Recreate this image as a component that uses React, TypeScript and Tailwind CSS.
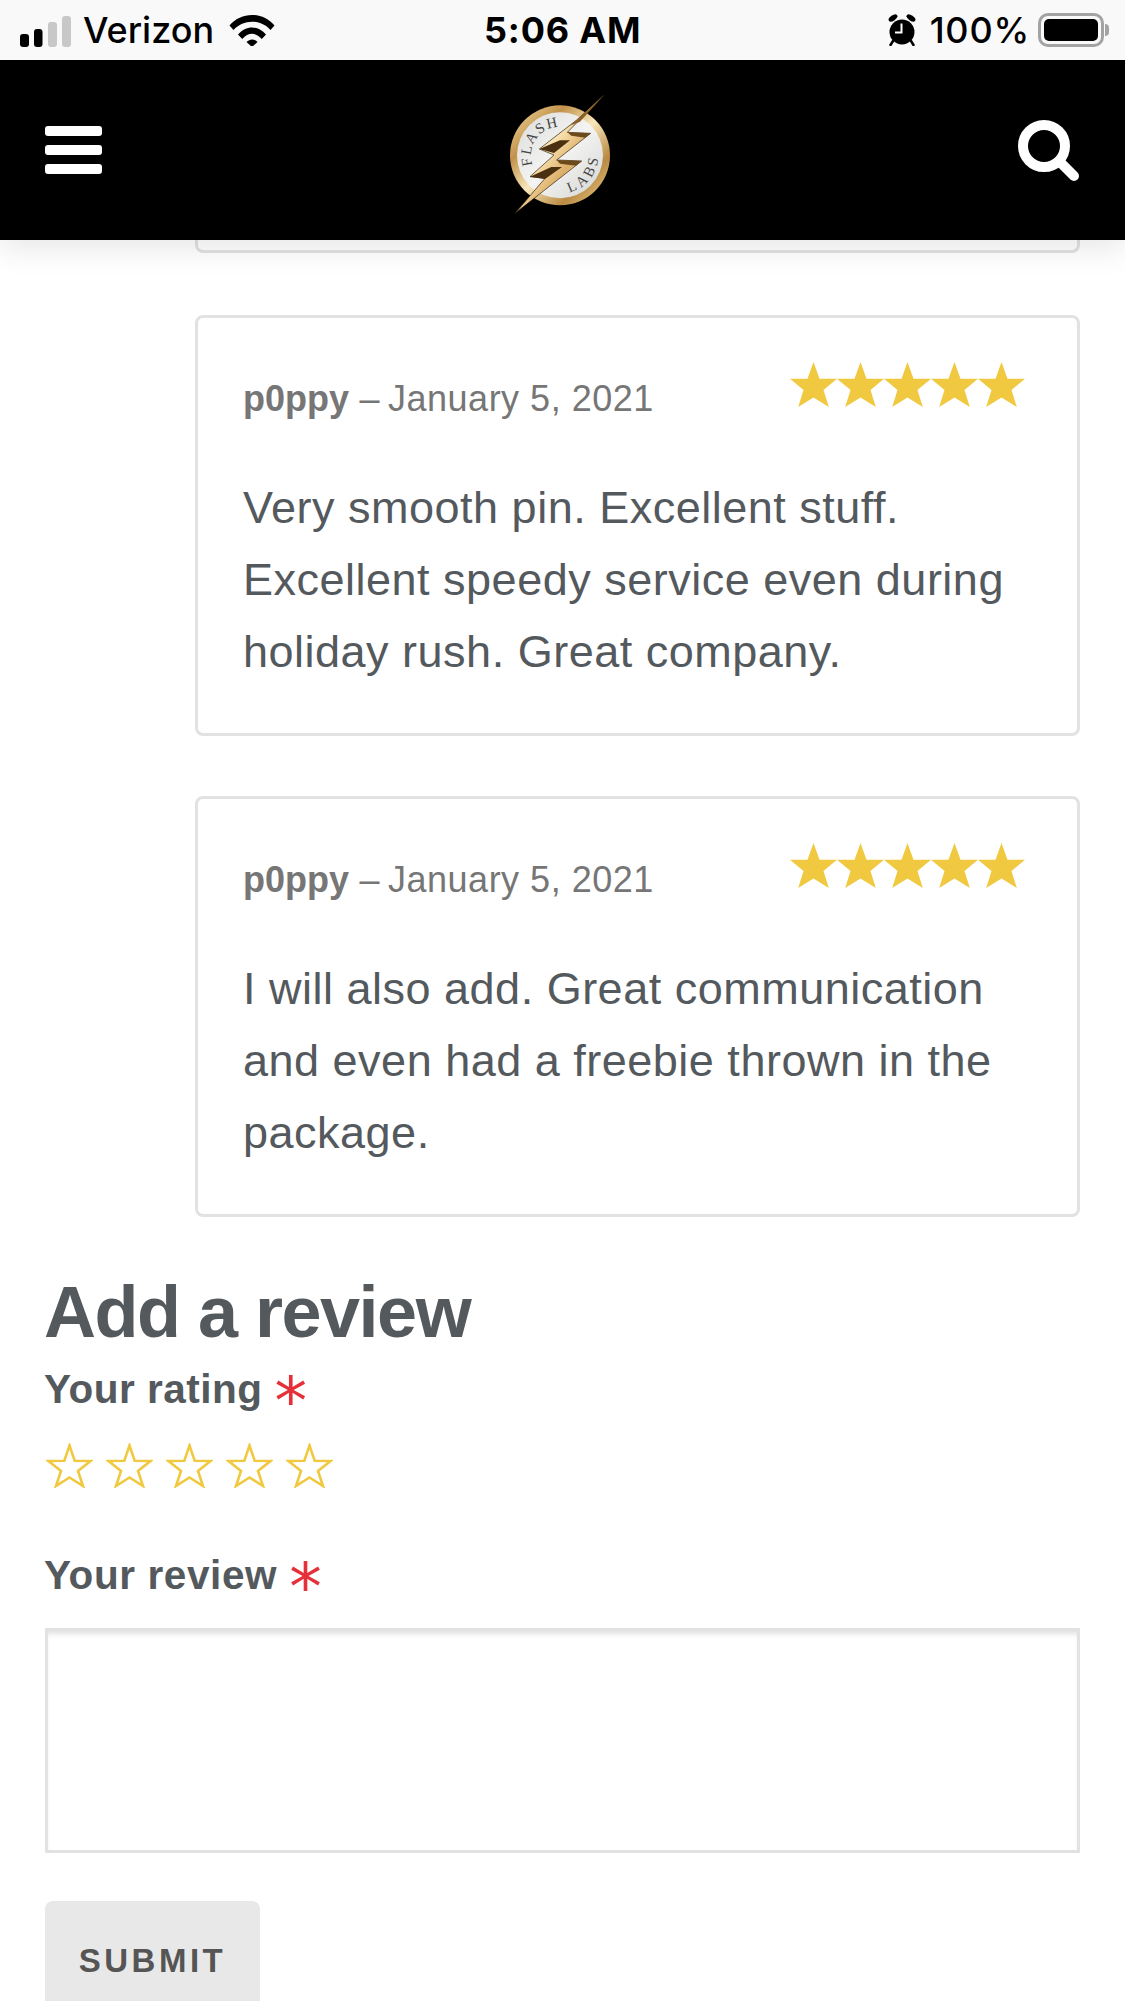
const helvetica = "font-['Liberation_Sans',Arial,sans-serif]";

const reviews = [
  { text: "Very smooth pin. Excellent stuff. Excellent speedy service even during holiday rush. Great company." },
  { text: "I will also add. Great communication and even had a freebie thrown in the package." },
];

function Star({ filled }: { filled?: boolean }) {
  return (
    <svg viewBox="0 0 47 45" className="h-[45px] w-[47px]">
      <polygon
        points={
          filled
            ? "23.5,0 29.5,16.7 47,16.7 33.5,28 38.8,45 23.5,35.5 8.2,45 13.5,28 0,16.7 17.5,16.7"
            : "23.5,2.5 28.7,17.8 44.5,18 32,28 37,43 23.5,34.5 10,43 15,28 2.5,18 18.3,17.8"
        }
        fill={filled ? "#f0c940" : "none"}
        stroke={filled ? "none" : "#f0c940"}
        strokeWidth="2.6"
      />
    </svg>
  );
}

function StatusBar() {
  return (
    <div className="flex h-[60px] items-center bg-[#f9f9f9] pl-[20px] pr-[16px] font-['Inter',sans-serif] text-[36px] leading-none text-black">
      <div className="flex w-[280px] items-center">
        <svg viewBox="0 0 51 32" className="h-[32px] w-[51px] translate-y-[2px]">
          <rect x="0" y="18" width="9" height="13" rx="3" fill="#000" />
          <rect x="14" y="13" width="8.5" height="18" rx="3" fill="#000" />
          <rect x="28" y="6" width="9" height="25" rx="3" fill="#c8c8c8" />
          <rect x="42" y="0" width="9" height="31" rx="3" fill="#c8c8c8" />
        </svg>
        <span className="ml-[12px] font-medium">Verizon</span>
        <svg viewBox="0 0 46 32" className="ml-[15px] h-[32px] w-[46px] shrink-0">
          <path d="M0.5 11.5 C12 -2.5 34 -2.5 45.5 11.5 L41.5 16 C31.5 5 14.5 5 4.5 16 Z" fill="#000" />
          <path d="M9 20.5 C17 11 29 11 37 20.5 L32.8 25 C26.5 18 19.5 18 13.2 25 Z" fill="#000" />
          <path d="M17.5 28 C21 24.5 25 24.5 28.5 28 L23 33 Z" fill="#000" />
        </svg>
      </div>
      <span className="ml-[184px] font-bold tracking-[0.8px]">5:06 AM</span>
      <div className="ml-auto flex items-center">
        <svg viewBox="0 0 30 32" className="h-[32px] w-[30px]">
          <circle cx="15" cy="18" r="12.5" fill="#000" />
          <ellipse cx="6" cy="4" rx="5" ry="2.6" transform="rotate(-35 6 4)" fill="#000" />
          <ellipse cx="24" cy="4" rx="5" ry="2.6" transform="rotate(35 24 4)" fill="#000" />
          <path d="M6 27 L3.5 31 M24 27 L26.5 31" stroke="#000" strokeWidth="2.5" strokeLinecap="round" />
          <path d="M14.5 9.5 V18.5 H8" stroke="#fff" strokeWidth="2" fill="none" />
        </svg>
        <span className="ml-[13px] font-medium tracking-[0.8px]">100%</span>
        <div className="ml-[8px] flex items-center">
          <div className="h-[34px] w-[66px] rounded-[10px] border-[3px] border-[#a3a3a3] p-[3px]">
            <div className="h-full w-full rounded-[5px] bg-black" />
          </div>
          <div className="ml-[1px] h-[12px] w-[4px] rounded-r-full bg-[#a3a3a3]" />
        </div>
      </div>
    </div>
  );
}

function Logo() {
  return (
    <svg viewBox="0 0 480 450" className="h-[150px] w-[160px]">
      <defs>
        <linearGradient id="ring" x1="0" y1="0" x2="1" y2="1">
          <stop offset="0" stopColor="#f6dfa8" />
          <stop offset="0.28" stopColor="#c2924a" />
          <stop offset="0.5" stopColor="#f8e7bd" />
          <stop offset="0.75" stopColor="#b98a42" />
          <stop offset="1" stopColor="#f2d696" />
        </linearGradient>
        <linearGradient id="plate" x1="0" y1="0" x2="1" y2="1">
          <stop offset="0" stopColor="#dcdcdc" />
          <stop offset="0.5" stopColor="#f4f4f2" />
          <stop offset="1" stopColor="#d4d6d4" />
        </linearGradient>
        <linearGradient id="bolt" x1="0" y1="0" x2="1" y2="1">
          <stop offset="0" stopColor="#d8aa62" />
          <stop offset="0.4" stopColor="#fbe6b6" />
          <stop offset="0.6" stopColor="#dcae68" />
          <stop offset="0.8" stopColor="#f9e0ac" />
          <stop offset="1" stopColor="#b88a44" />
        </linearGradient>
        <path id="flashArc" d="M158 270 A85 85 0 0 1 248 156" />
        <path id="labsArc" d="M268 352 A115 115 0 0 0 355 235" />
      </defs>
      <circle cx="240" cy="241" r="150" fill="url(#ring)" />
      <circle cx="240" cy="241" r="129" fill="url(#plate)" />
      <text fill="#444" fontSize="44" fontFamily="Liberation Serif, serif" letterSpacing="5">
        <textPath href="#flashArc">FLASH</textPath>
      </text>
      <text fill="#444" fontSize="44" fontFamily="Liberation Serif, serif" letterSpacing="10">
        <textPath href="#labsArc">LABS</textPath>
      </text>
      <polygon
        points="372,60 262,172 332,175 230,255 305,258 105,415 195,310 150,305 222,240 178,222 290,135"
        fill="url(#bolt)"
        stroke="#2a1a08"
        strokeWidth="2"
      />
      <polygon points="178,222 222,234 270,196 240,196" fill="#4a3010" />
      <polygon points="150,305 195,312 246,276 214,276" fill="#4a3010" />
      <polygon points="262,172 332,175 316,188 274,182" fill="#6b4a1c" />
      <polygon points="230,255 305,258 288,272 240,266" fill="#6b4a1c" />
      <polygon points="372,60 290,135 270,152 300,140" fill="#8a6127" />
    </svg>
  );
}

function Header() {
  return (
    <header className="relative z-10 shadow-[0_8px_30px_rgba(0,0,0,0.1)]">
      <StatusBar />
      <nav className="flex h-[180px] items-center justify-between bg-black pl-[45px] pr-[46px]">
        <div className="flex w-[57px] flex-col gap-[9px]">
          <div className="h-[10px] rounded-[3px] bg-white" />
          <div className="h-[10px] rounded-[3px] bg-white" />
          <div className="h-[10px] rounded-[3px] bg-white" />
        </div>
        <Logo />
        <svg viewBox="0 0 61 61" className="h-[61px] w-[61px]">
          <circle cx="26" cy="26" r="21" fill="none" stroke="#fff" strokeWidth="10" />
          <path d="M42 42 L56 56" stroke="#fff" strokeWidth="10" strokeLinecap="round" />
        </svg>
      </nav>
    </header>
  );
}

function ReviewCard({ text }: { text: string }) {
  return (
    <div className="rounded-[8px] border-[3px] border-[#e2e2e2] pb-[45px] pl-[45px] pr-[52px] pt-[44px]">
      <div className="flex items-start justify-between">
        <p className="pt-[10px] text-[36px] leading-[54px] tracking-[0.5px] text-[#767676]">
          <strong className="font-bold tracking-normal">p0ppy</strong> – <span className="-ml-[2.5px]">January 5, 2021</span>
        </p>
        <div className="flex">
          {[0, 1, 2, 3, 4].map((i) => (
            <Star key={i} filled />
          ))}
        </div>
      </div>
      <p className="mt-[46px] text-[45px] leading-[72px] tracking-[0.5px] text-[#54595d]">{text}</p>
    </div>
  );
}

function Required() {
  return (
    <span className="ml-[12px] align-[-21px] font-['DejaVu_Sans',sans-serif] text-[65px] font-normal leading-[0] text-[#e5303a]">
      *
    </span>
  );
}

export default function App() {
  return (
    <div className={`h-[2001px] overflow-hidden bg-white ${helvetica}`}>
      <Header />
      <main className="px-[45px]">
        <div className="ml-[150px] flex w-[885px] flex-col gap-[60px]">
          <div className="mb-[2px] h-[13px] rounded-b-[8px] border-x-[3px] border-b-[3px] border-[#e2e2e2]" />
          {reviews.map((r) => (
            <ReviewCard key={r.text} text={r.text} />
          ))}
        </div>

        <h2 className="-ml-[1px] mt-[52px] text-[72px] font-bold leading-[86px] tracking-[-1.5px] text-[#54595d]">Add a review</h2>
        <label className="-ml-[1px] mt-[9px] block text-[40.5px] font-bold leading-[50px] tracking-[0.5px] text-[#54595d]">
          Your rating
          <Required />
        </label>
        <div className="ml-[1px] mt-[29px] flex gap-[13px]">
          {[0, 1, 2, 3, 4].map((i) => (
            <Star key={i} />
          ))}
        </div>
        <label className="-ml-[1px] mt-[62px] block text-[40.5px] font-bold leading-[50px] tracking-[0.6px] text-[#54595d]">
          Your review
          <Required />
        </label>
        <textarea className="mt-[28px] block h-[225px] w-[1035px] resize-none border-[3px] border-[#e2e2e2] shadow-[inset_0_5px_5px_-2px_rgba(0,0,0,0.12)] outline-none" />
        <button className="mt-[48px] block h-[110px] w-[215px] rounded-[8px] bg-[#e8e8e8] pt-[10px] text-[33px] font-bold tracking-[3.5px] text-[#555]">
          SUBMIT
        </button>
      </main>
    </div>
  );
}
